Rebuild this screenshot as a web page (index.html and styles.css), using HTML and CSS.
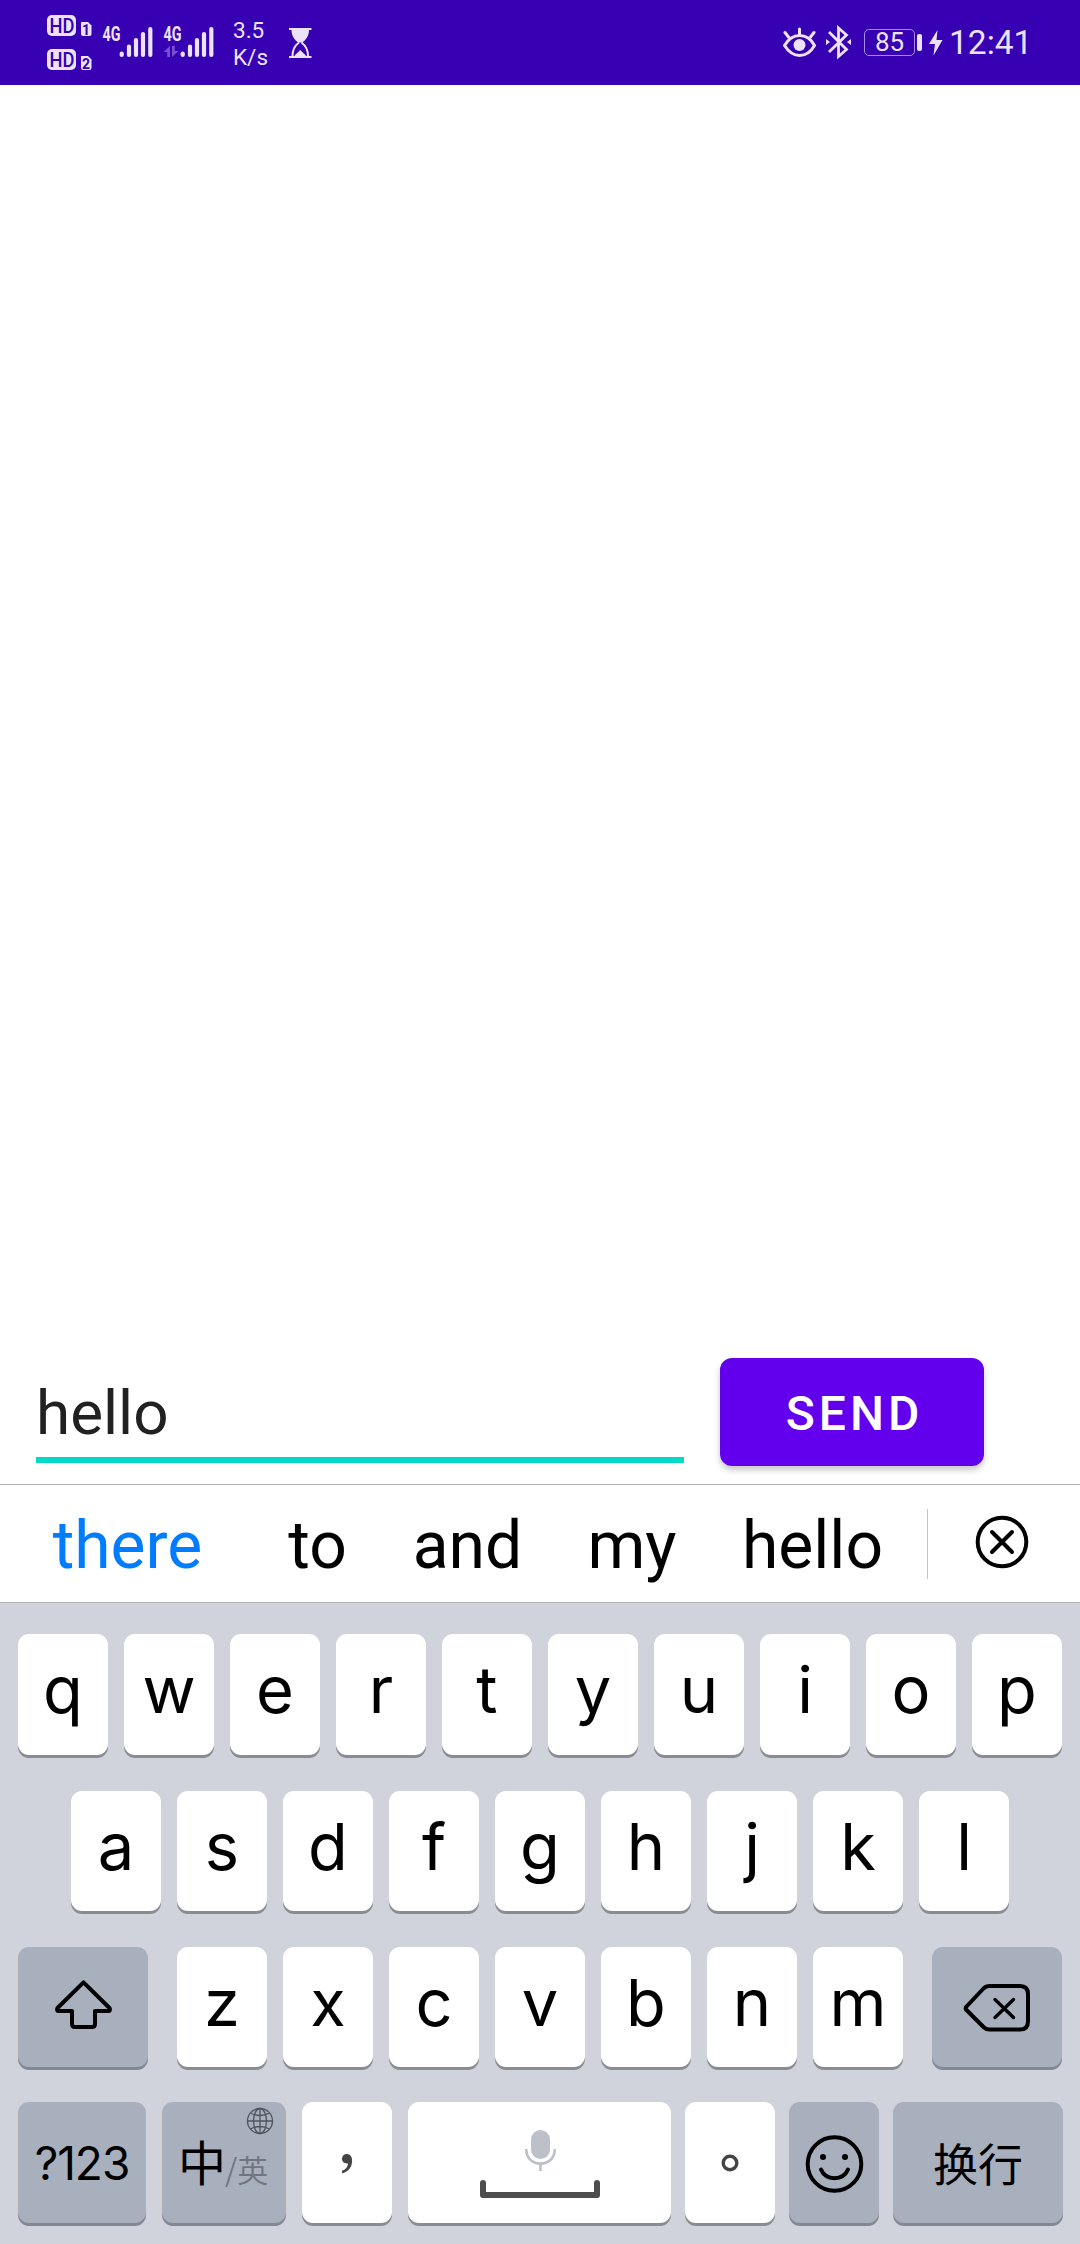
FILE: index.html
```html
<!DOCTYPE html>
<html lang="en">
<head>
<meta charset="utf-8">
<title>Chat</title>
<link rel="stylesheet" href="styles.css">
</head>
<body>
<header class="status">
  <div class="status-left">
    <svg class="ic" width="48" height="85" viewBox="46 0 48 85">
      <rect x="47" y="15" width="29" height="21" rx="5"/>
      <text class="cut" x="49.500" y="32.500" font-size="20" textLength="25" lengthAdjust="spacingAndGlyphs">HD</text>
      <path d="M81 22h7l3.500 3.500V34q0 2-2 2H83q-2 0-2-2z"/>
      <text class="cut bold" x="82" y="34.500" font-size="14">1</text>
      <rect x="47" y="49" width="29" height="21" rx="5"/>
      <text class="cut" x="49.500" y="66.500" font-size="20" textLength="25" lengthAdjust="spacingAndGlyphs">HD</text>
      <path d="M81 56h7l3.500 3.500V68q0 2-2 2H83q-2 0-2-2z"/>
      <text class="cut bold" x="82" y="68.500" font-size="14">2</text>
    </svg>
    <svg class="ic sig1" width="52" height="85" viewBox="102 0 52 85">
      <text class="bold" x="102.500" y="41" font-size="19.500" textLength="18" lengthAdjust="spacingAndGlyphs">4G</text>
      <g class="bars"><path d="M121.700 53.500V55M129 46.500V55M136 40V55M143 34V55M150.300 29V55"/></g>
    </svg>
    <svg class="ic sig2" width="52" height="85" viewBox="163 0 52 85">
      <text class="bold" x="163.500" y="41" font-size="19.500" textLength="18" lengthAdjust="spacingAndGlyphs">4G</text>
      <path class="dim" d="M170 57h-2.800v-5H163.500L170 46zM172 46h2.800v5H178.500L172 57z"/>
      <g class="bars"><path d="M182.700 53.500V55M190 46.500V55M197 40V55M204 34V55M211.300 29V55"/></g>
    </svg>
    <div class="speed"><span>3.5</span><span>K/s</span></div>
    <svg class="ic hour" width="24" height="85" viewBox="288 0 24 85">
      <path d="M289 28h22.500v2H289zM289 56h22.500v2H289zM291.500 30h17.500c0 6-3 9.500-6.500 12.500h-4.500c-3.500-3-6.500-6.500-6.500-12.500z"/>
      <path d="M299 42.500c-4 3-6.500 7-6.500 13.500M301.500 42.500c4 3 6.500 7 6.500 13.500" fill="none" stroke="#ece3fb" stroke-width="2"/>
      <path d="M294.500 56c1-2.500 3.500-3 5.700-6 2.200 3 4.800 3.500 5.800 6z"/>
    </svg>
  </div>
  <div class="status-right">
    <svg class="ic" width="34" height="85" viewBox="783 0 34 85">
      <g fill="none" stroke="#ece3fb" stroke-width="3" stroke-linecap="round"><path d="M784.500 45.500C789 38 794 35.500 799.500 35.500S810.500 38 814.500 45.500C810.500 52.500 805 55.500 799.500 55.500S789 52.500 784.500 45.500z" stroke-linejoin="round"/><path d="M799.500 34V29M788.500 37l-3.500-4.500M810.500 37l3.500-4.500"/></g>
      <circle cx="799.500" cy="45" r="6"/>
    </svg>
    <svg class="ic bt" width="26" height="85" viewBox="826 0 26 85">
      <path d="M829 32L846.500 49.500 838.500 56.500V28L846.500 35 829 52" fill="none" stroke="#ece3fb" stroke-width="2.800"/>
      <path d="M826 39l4 3-4 3zM851 39l-4 3 4 3z"/>
    </svg>
    <div class="battery">85</div>
    <div class="nub"></div>
    <svg class="ic bolt" width="14" height="85" viewBox="929 0 14 85"><path d="M937.500 30L929 44h6l-1.500 11.500L942.500 40h-6z"/></svg>
    <time class="clock">12:41</time>
  </div>
</header>
<main class="messages"></main>
<form class="composer">
  <div class="field">hello</div>
  <button class="send" type="button">SEND</button>
</form>
<section class="suggest">
  <span class="word w1">there</span><span class="word w2">to</span><span class="word w3">and</span><span class="word w4">my</span><span class="word w5">hello</span>
  <i class="divider"></i>
  <svg class="close" width="54" height="54" viewBox="-27 -27 54 54"><g fill="none" stroke="#000" stroke-width="4" stroke-linecap="round"><circle r="24.300"/><path d="M-10-10L10 10M10-10L-10 10"/></g></svg>
</section>
<section class="keyboard">
  <div class="row r1"><b>q</b><b>w</b><b>e</b><b>r</b><b>t</b><b>y</b><b>u</b><b>i</b><b>o</b><b>p</b></div>
  <div class="row r2"><b>a</b><b>s</b><b>d</b><b>f</b><b>g</b><b>h</b><b>j</b><b>k</b><b>l</b></div>
  <div class="row r3">
    <b class="dark shift"><svg width="130" height="120" viewBox="18 1947 130 120"><path d="M83.500 1982.300L109.500 2008q1.500 3-1.500 3H95V2024q0 3-3 3H75q-3 0-3-3V2011H59q-3 0-1.500-3z"/></svg></b>
    <b>z</b><b>x</b><b>c</b><b>v</b><b>b</b><b>n</b><b>m</b>
    <b class="dark del"><svg width="130" height="120" viewBox="932 1947 130 120"><path d="M967 2006L983.500 1988.500Q986 1986 989 1986H1020Q1028 1986 1028 1994V2021.500Q1028 2029.500 1020 2029.500H989Q986 2029.500 983.500 2027L966 2009.500Q965 2007.700 967 2006z"/><path class="thin" d="M995 1999.500L1013.500 2017.500M1013.500 1999.500L995 2017.500"/></svg></b>
  </div>
  <div class="row r4">
    <b class="dark num">?123</b>
    <b class="dark lang"><span class="zh">中</span><span class="en">/英</span>
      <svg class="globe" width="28" height="28" viewBox="-14 -14 28 28"><circle r="12.500"/><ellipse rx="6.500" ry="12.500"/><path d="M0-12.500V12.500M-12.500 0H12.500M-9.500-8Q0-3 9.500-8M-9.500 8Q0 3 9.500 8"/></svg>
    </b>
    <b class="comma"><svg width="90" height="121" viewBox="302 2102 90 121"><path d="M342 2158.800a4.800 4.800 0 0 1 4.900-4.900c3.300 0 5.200 2.800 5.200 6.600 0 7-4 11.500-10.100 12.800v-2.600c3.500-1.300 5.800-3.600 6-7.300-3.300.6-6-1.400-6-4.600z"/></svg></b>
    <b class="space"><svg width="263" height="121" viewBox="408 2102 263 121"><rect class="mic" x="531" y="2130" width="19" height="29" rx="9.500"/><path class="stand" d="M526.200 2149C526.200 2168.500 554.800 2168.500 554.800 2149M540.500 2163v8"/><path class="bar" d="M483 2183V2195H597V2183"/></svg></b>
    <b class="stop"><svg width="90" height="121" viewBox="685 2102 90 121"><circle cx="730" cy="2163" r="6.800"/></svg></b>
    <b class="dark emoji"><svg width="90" height="121" viewBox="789 2102 90 121"><circle cx="834.500" cy="2164" r="26.800"/><path d="M821 2169.500C826 2181 843 2181 848 2169.500"/><circle class="eye" cx="823" cy="2157" r="3"/><circle class="eye" cx="845" cy="2157" r="3"/></svg></b>
    <b class="dark enter">换行</b>
  </div>
</section>
</body>
</html>
```
FILE: styles.css
```css
* { box-sizing: border-box; }
body {
  margin: 0;
  width: 1080px;
  height: 2244px;
  display: flex;
  flex-direction: column;
  background: #fff;
  font-family: Roboto, "Noto Sans CJK SC", sans-serif;
  overflow: hidden;
}
svg { display: block; flex: none; }
.status {
  height: 85px;
  flex: none;
  display: flex;
  justify-content: space-between;
  background: #3700b3;
  color: #ece3fb;
  padding: 0 49px 0 46px;
}
.status-left, .status-right { display: flex; }
.ic { fill: #ece3fb; }
.ic text { font-family: Roboto, sans-serif; font-weight: 500; }
.ic .bold { font-weight: 700; }
.ic .cut { fill: #3700b3; }
.ic .dim { fill: #7a4fd0; }
.bars { stroke: #ece3fb; stroke-width: 4.2; stroke-linecap: round; }
.sig1 { margin-left: 8px; }
.sig2 { margin-left: 9px; }
.speed {
  width: 55px;
  margin-left: 18px;
  padding-top: 17px;
  display: flex;
  flex-direction: column;
  font-size: 22.5px;
  line-height: 27px;
}
.status-right { align-items: center; }
.bt { margin-left: 9px; }
.battery {
  width: 51px;
  height: 27px;
  margin-left: 12px;
  border: 1.5px solid #a98ae2;
  border-radius: 5px;
  font-size: 26px;
  line-height: 25px;
  text-align: center;
}
.nub { width: 5px; height: 17px; margin-left: 2px; border-radius: 2px; background: #ece3fb; }
.bolt { margin-left: 7px; }
.clock { width: 82px; margin-left: 6px; font-size: 33.5px; line-height: 40px; }

.messages { flex: 1; }
.composer {
  height: 127px;
  flex: none;
  display: flex;
  padding-left: 36px;
  gap: 36px;
}
.field {
  width: 648px;
  height: 106px;
  border-bottom: 6px solid #03dac5;
  color: #212121;
  font-size: 62px;
  line-height: 73px;
  padding-top: 19px;
}
.send {
  width: 264px;
  height: 108px;
  margin-top: 1px;
  border: 0;
  border-radius: 12px;
  background: #6200ee;
  color: #fff;
  font: 500 48px Roboto, sans-serif;
  letter-spacing: 4px;
  padding: 2px 0 0 5px;
  box-shadow: 0 4px 6px rgba(0,0,0,.22);
}
.suggest {
  height: 118px;
  flex: none;
  border-top: 1px solid #b4b4b6;
  display: flex;
  align-items: center;
  font-size: 66px;
  color: #000;
}
.word { text-align: center; line-height: 76px; padding-top: 4px; }
.w1 { width: 255px; color: #007dff; }
.w2 { width: 125px; }
.w3 { width: 175px; }
.w4 { width: 154px; }
.w5 { width: 207px; }
.divider { width: 1px; height: 70px; margin-left: 11px; background: #c4c4c6; }
.close { margin: 0 0 3px 47px; }

.keyboard {
  height: 642px;
  flex: none;
  border-top: 1px solid #b0b3ba;
  background: #d0d3dc;
  padding: 31px 18px 0;
}
.row { display: flex; gap: 16px; margin-bottom: 36px; }
.row b {
  width: 90px;
  height: 120px;
  flex: none;
  border-radius: 11px;
  background: #fff;
  box-shadow: 0 3px 0 #8a8c93;
  color: #000;
  font: 370 65px/111px Inter, "Noto Sans CJK SC", sans-serif;
  text-align: center;
}
.row .dark { background: #a8afbd; box-shadow: 0 3px 0 #838993; }
.r1 b, .r4 b { height: 121px; }
.r2 { padding-left: 53px; }
.r3 { margin-bottom: 35px; }
.row .shift, .row .del { width: 130px; }
.shift { margin-right: 13px; }
.del { margin-left: 13px; }
.shift path, .del path, .emoji path, .emoji circle {
  fill: none; stroke: #000; stroke-width: 4; stroke-linejoin: round; stroke-linecap: round;
}
.del .thin { stroke-width: 3.4; }
.row .num { width: 128px; font-size: 46px; line-height: 123px; letter-spacing: -1px; }
.row .lang { width: 124px; position: relative; display: flex; padding-left: 16px; }
.zh { font: 400 48px/117px "Noto Sans CJK SC", sans-serif; width: 47px; }
.en { font: 350 31px/134px "Noto Sans CJK SC", sans-serif; color: #6f7680; }
.globe { position: absolute; right: 12px; top: 5px; fill: none; stroke: #4f555e; stroke-width: 1.3; }
.comma path { fill: #444; }
.row .space { width: 263px; }
.mic { fill: #bbc0c9; }
.stand { fill: none; stroke: #bbc0c9; stroke-width: 2.6; }
.bar { fill: none; stroke: #4d4d4d; stroke-width: 6; stroke-linecap: round; stroke-linejoin: round; }
.stop { margin-left: -2px; }
.stop circle { fill: none; stroke: #444; stroke-width: 3.4; }
.emoji { margin-left: -2px; }
.emoji .eye { fill: #000; stroke: none; }
.row .enter { width: 170px; margin-left: -2px; font-family: "Noto Sans CJK SC", sans-serif; font-size: 45px; line-height: 121px; }
```
